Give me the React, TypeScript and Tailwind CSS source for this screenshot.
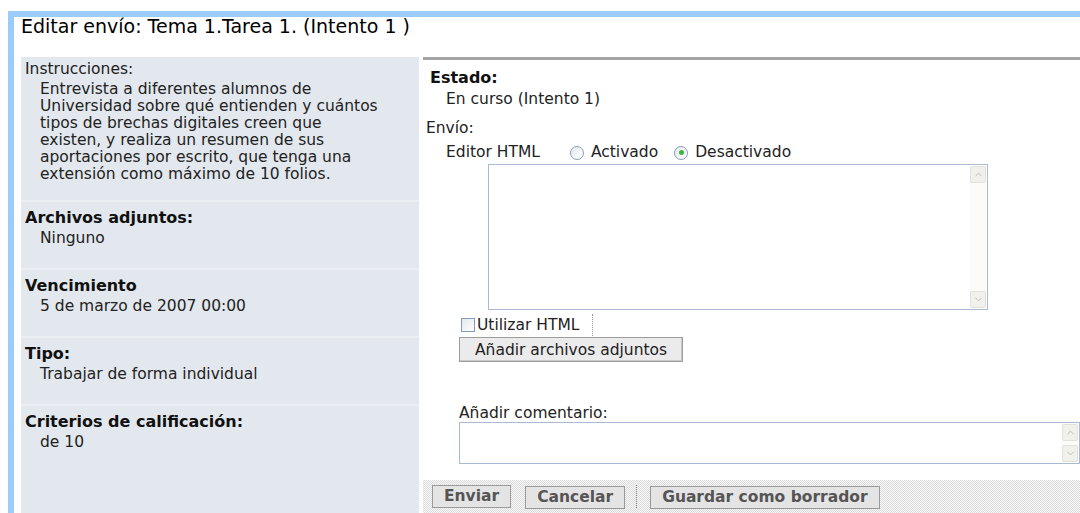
import { ChevronDown, ChevronUp } from 'lucide-react';

const font = { fontFamily: '"DejaVu Sans", Verdana, sans-serif' };

interface InfoSectionProps {
    label: string;
    value: string;
}

function InfoSection({ label, value }: InfoSectionProps) {
    return (
        <div className="h-[68px] border-t-2 border-[#eceff3] pt-[7px] pl-[4px]">
            <div className="text-[16px] leading-[17px] font-bold text-[#111]">{label}</div>
            <div className="mt-[4px] pl-[15px] text-[15.5px] leading-[17px]">{value}</div>
        </div>
    );
}

function Scrollbar() {
    return (
        <div className="flex w-[16px] flex-col justify-between bg-[#fbfbf7]">
            <div className="flex h-[17px] items-center justify-center rounded-[2px] border border-[#e2e2dc] bg-[#f1f1ec]">
                <ChevronUp size={11} strokeWidth={2} className="text-[#b8b8b0]" />
            </div>
            <div className="flex h-[17px] items-center justify-center rounded-[2px] border border-[#e2e2dc] bg-[#f1f1ec]">
                <ChevronDown size={11} strokeWidth={2} className="text-[#b8b8b0]" />
            </div>
        </div>
    );
}

function Radio({ checked }: { checked?: boolean }) {
    return (
        <span className="flex h-[14px] w-[14px] items-center justify-center rounded-full border border-[#8aa0ba] bg-gradient-to-br from-[#e4e9ee] to-white">
            {checked && <span className="h-[5px] w-[5px] rounded-full bg-[#3fb43f]" />}
        </span>
    );
}

function ActionButton({ children }: { children: React.ReactNode }) {
    return (
        <button className="h-[23px] border border-[#9a9a9a] bg-[#e4e4e4] px-[11px] text-[15.5px] leading-[21px] font-bold text-[#555]">
            {children}
        </button>
    );
}

export default function App() {
    return (
        <div className="h-[513px] w-[1080px] overflow-hidden bg-white pt-[11px] text-[#222]" style={font}>
            <div className="ml-[8px] h-[502px] border-t-[6px] border-l-[6px] border-[#9cccfc]">
                <h1 className="pl-[7px] text-[19px] leading-[18px] text-black">Editar envío: Tema 1.Tarea 1. (Intento 1 )</h1>

                <div className="mt-[22px] flex h-[456px]">
                    {/* datos de la tarea */}
                    <div className="ml-[7px] w-[398px] shrink-0 bg-[#e3e8ee]">
                        <div className="h-[143px] pt-[4px] pl-[4px]">
                            <div className="text-[15.5px] leading-[17px]">Instrucciones:</div>
                            <p className="mt-[3px] pl-[15px] text-[15.5px] leading-[17px] whitespace-nowrap">
                                Entrevista a diferentes alumnos de
                                <br />
                                Universidad sobre qué entienden y cuántos
                                <br />
                                tipos de brechas digitales creen que
                                <br />
                                existen, y realiza un resumen de sus
                                <br />
                                aportaciones por escrito, que tenga una
                                <br />
                                extensión como máximo de 10 folios.
                            </p>
                        </div>
                        <InfoSection label="Archivos adjuntos:" value="Ninguno" />
                        <InfoSection label="Vencimiento" value="5 de marzo de 2007 00:00" />
                        <InfoSection label="Tipo:" value="Trabajar de forma individual" />
                        <InfoSection label="Criterios de calificación:" value="de 10" />
                    </div>

                    {/* formulario de envío */}
                    <div className="ml-[4px] flex-1">
                        <div className="border-t-[3px] border-[#a3a3a3]" />
                        <div className="pt-[9px] pl-[7px] text-[16px] leading-[17px] font-bold text-[#111]">Estado:</div>
                        <div className="mt-[5px] pl-[23px] text-[15.5px] leading-[17px]">En curso (Intento 1)</div>
                        <div className="mt-[12px] pl-[3px] text-[15.5px] leading-[17px]">Envío:</div>
                        <div className="mt-[7px] flex items-center pl-[23px] text-[15.5px] leading-[17px]">
                            <span>Editor HTML</span>
                            <span className="ml-[30px]">
                                <Radio />
                            </span>
                            <span className="ml-[7px]">Activado</span>
                            <span className="ml-[16px]">
                                <Radio checked />
                            </span>
                            <span className="ml-[7px]">Desactivado</span>
                        </div>
                        <div className="mt-[3px] ml-[65px] flex h-[146px] w-[500px] justify-end border border-[#a8bbd2] bg-white p-[1px]">
                            <Scrollbar />
                        </div>
                        <div className="mt-[4px] flex items-center pl-[38px] text-[15.5px] leading-[17px]">
                            <span className="h-[14px] w-[14px] border border-[#7f9db9] bg-gradient-to-br from-[#e4e8ec] to-white" />
                            <span className="ml-[2px]">Utilizar HTML</span>
                            <span className="ml-[13px] h-[22px] border-l border-dotted border-[#999]" />
                        </div>
                        <div className="mt-[1px] pl-[36px]">
                            <button className="h-[25px] border border-[#9d9d9d] bg-[#ebebeb] px-[15px] text-[15.5px] leading-[22px] text-[#222] shadow-[inset_-1px_-1px_0_#c8c8c8]">
                                Añadir archivos adjuntos
                            </button>
                        </div>
                        <div className="mt-[43px] pl-[36px] text-[15.5px] leading-[17px]">Añadir comentario:</div>
                        <div className="mt-[0px] ml-[36px] flex h-[42px] justify-end border border-[#a8bbd2] bg-white p-[1px]">
                            <Scrollbar />
                        </div>
                        <div className="mt-[16px] flex h-[40px] items-start bg-[conic-gradient(#dcdcdc_25%,#f7f7f7_0_50%,#dcdcdc_0_75%,#f7f7f7_0)] bg-[length:2px_2px] pt-[5px] pl-[9px]">
                            <ActionButton>Enviar</ActionButton>
                            <span className="ml-[14px]">
                                <ActionButton>Cancelar</ActionButton>
                            </span>
                            <span className="ml-[11px] h-[23px] border-l border-dotted border-[#888]" />
                            <span className="ml-[13px]">
                                <ActionButton>Guardar como borrador</ActionButton>
                            </span>
                        </div>
                    </div>
                </div>
            </div>
        </div>
    );
}
